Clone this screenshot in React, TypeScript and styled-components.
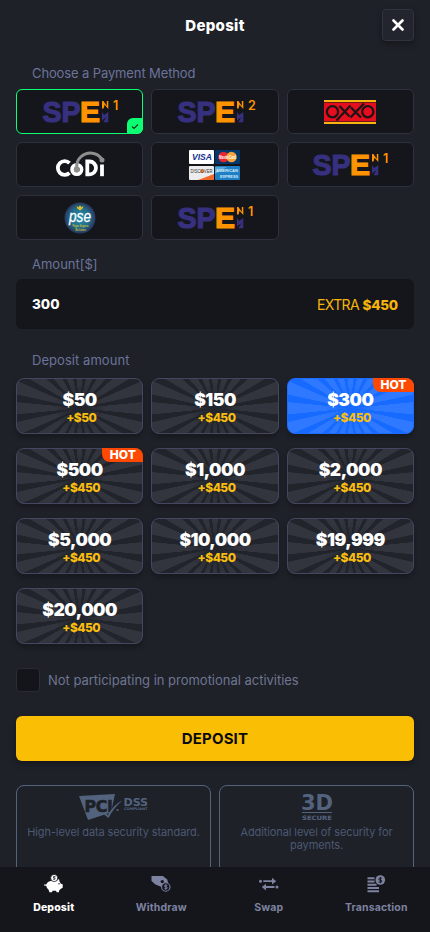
import React from "react";
import styled, { createGlobalStyle, css } from "styled-components";

const Global = createGlobalStyle`
  * { box-sizing: border-box; }
  body { margin: 0; background: #1e2128; font-family: Inter, "Liberation Sans", sans-serif; }
  button { font: inherit; padding: 0; cursor: pointer; }
`;

const Screen = styled.div`
  width: 430px;
  height: 932px;
  display: flex;
  flex-direction: column;
  overflow: hidden;
  background: #1e2128;
  color: #fff;
`;

const Header = styled.header`
  flex: none;
  display: grid;
  grid-template-columns: 32px 1fr 32px;
  align-items: center;
  height: 50px;
  padding: 0 16px;
`;

const Title = styled.h1`
  grid-column: 2;
  margin: 0;
  padding-top: 2px;
  text-align: center;
  font-size: 15px;
  line-height: 20px;
  font-weight: 800;
  letter-spacing: 0.3px;
`;

const CloseButton = styled.button`
  display: grid;
  place-items: center;
  width: 32px;
  height: 32px;
  border: 1px solid #303340;
  border-radius: 4px;
  background: #23252e;
  box-shadow: 0 3px 6px rgba(0, 0, 0, 0.3);
`;

const Content = styled.main`
  flex: 1;
  min-height: 0;
  overflow: hidden;
  padding: 12px 16px 0;
`;

const Label = styled.h2<{ $height: number; $drop?: number; $spacing?: number }>`
  display: flex;
  align-items: center;
  height: ${(p) => p.$height}px;
  margin: 0;
  padding: ${(p) => p.$drop ?? 0}px 0 0 16px;
  color: #6c739a;
  font-size: 13px;
  font-weight: 400;
  letter-spacing: ${(p) => p.$spacing ?? 0}px;
`;

const MethodGrid = styled.div`
  display: grid;
  grid-template-columns: repeat(3, 1fr);
  grid-auto-rows: 45px;
  gap: 8px;
  margin-top: 5px;
`;

const Method = styled.button<{ $active?: boolean }>`
  position: relative;
  display: grid;
  place-items: center;
  border: 1px solid ${(p) => (p.$active ? "#0cff73" : "#2d303d")};
  border-radius: 6px;
  background: #15161b;
  svg { overflow: visible; }
`;

const Tick = styled.span`
  position: absolute;
  right: -1px;
  bottom: -1px;
  display: grid;
  place-items: center;
  width: 16px;
  height: 16px;
  border-radius: 6px 0 6px 0;
  background: #0cff73;
`;

const AmountField = styled.div`
  display: flex;
  align-items: center;
  justify-content: space-between;
  height: 50px;
  padding: 0 16px;
  border-radius: 6px;
  background: #15161b;
`;

const AmountValue = styled.span`
  font-weight: 800;
  font-size: 13.5px;
`;

const Extra = styled.span`
  color: #f5b50a;
  font-size: 14px;
  letter-spacing: -0.6px;
  b { font-weight: 800; font-size: 13.5px; letter-spacing: -0.2px; }
`;

const OfferGrid = styled.div`
  display: grid;
  grid-template-columns: repeat(3, 1fr);
  grid-auto-rows: 56px;
  gap: 14px 8px;
  margin-top: 6px;
`;

const rays = (light: string, dark: string) => css`
  background:
    radial-gradient(circle at 50% 54%, ${dark} 2px, transparent 26px) border-box,
    repeating-conic-gradient(
      from -5.3deg at 50% 54%,
      ${light} 0deg 10.6deg,
      ${dark} 11.2deg 17.4deg,
      ${light} 18deg
    ) border-box;
`;

const Offer = styled.button<{ $active?: boolean }>`
  position: relative;
  display: flex;
  flex-direction: column;
  align-items: center;
  padding-top: 11px;
  border: 1px solid ${(p) => (p.$active ? "#1c6cff" : "#444760")};
  border-radius: 8px;
  box-shadow: 0 3px 5px rgba(0, 0, 0, 0.28);
  ${(p) => (p.$active ? rays("#2e79ff", "#166aff") : rays("#33353e", "#22242c"))}
  color: #fff;
`;

const OfferAmount = styled.span`
  font-size: 17.5px;
  line-height: 20px;
  font-weight: 900;
  letter-spacing: -0.5px;
`;

const OfferBonus = styled.span`
  padding-left: 3px;
  color: #f9bd0e;
  font-size: 12px;
  line-height: 16px;
  font-weight: 800;
  letter-spacing: -0.55px;
`;

const Hot = styled.span`
  position: absolute;
  top: -1px;
  right: -1px;
  width: 41px;
  height: 14px;
  border-radius: 0 8px 0 8px;
  background: #ff4800;
  font-size: 12px;
  line-height: 14px;
  font-weight: 800;
  text-align: center;
`;

const Promo = styled.label`
  display: flex;
  align-items: center;
  gap: 8px;
  height: 24px;
  margin-top: 24px;
  color: #6f7590;
  font-size: 13px;
  letter-spacing: -0.02px;
`;

const Checkbox = styled.span`
  width: 24px;
  height: 24px;
  border: 1px solid #292c37;
  border-radius: 4px;
  background: #14151a;
`;

const Submit = styled.button`
  width: 100%;
  height: 45px;
  margin-top: 24px;
  border: 0;
  border-radius: 6px;
  background: #fabe05;
  box-shadow: 0 3px 6px rgba(0, 0, 0, 0.32);
  && {
    color: #0b0b0d;
    font-size: 15px;
    font-weight: 700;
    letter-spacing: 0.15px;
  }
`;

const Trust = styled.div`
  display: grid;
  grid-template-columns: 1fr 1fr;
  gap: 8px;
  margin-top: 24px;
`;

const TrustCard = styled.section`
  display: flex;
  flex-direction: column;
  align-items: center;
  height: 110px;
  padding: 7px 0;
  border: 1px solid #53637e;
  border-radius: 8px;
  color: #4c5973;
  font-size: 11px;
  line-height: 13px;
  letter-spacing: -0.1px;
  text-align: center;
  svg { overflow: visible; }
  p { margin: 5px 0 0; }
`;

const Nav = styled.nav`
  flex: none;
  display: grid;
  grid-template-columns: repeat(4, 1fr);
  height: 65px;
  background: #15161b;
`;

const NavItem = styled.a<{ $active?: boolean }>`
  display: flex;
  flex-direction: column;
  align-items: center;
  gap: 7px;
  padding-top: 7px;
  color: ${(p) => (p.$active ? "#fff" : "#7d82a0")};
  font-size: 10.5px;
  line-height: 14px;
  font-weight: ${(p) => (p.$active ? 800 : 700)};
  letter-spacing: 0.15px;
`;

const Spei = ({ n }: { n: number }) => (
  <svg width="80" height="30" viewBox="0 0 80 30">
    <g fontFamily="Liberation Sans, Arial, sans-serif" fontWeight="700" fontSize="29.5" strokeWidth="1.2">
      <text x="2.500" y="24.700" textLength="38" lengthAdjust="spacingAndGlyphs" fill="#36307f" stroke="#36307f">SP</text>
      <text x="40" y="24.700" textLength="20" lengthAdjust="spacingAndGlyphs" fill="#ff9400" stroke="#ff9400">E</text>
    </g>
    <path d="M62 4h1.400l3.400 5V4h1.500v8L64.500 7.800 63.600 11.500H62z" fill="#ff9400" />
    <path d="M62 15l2.200 3 4.100-3v10.300h-5l3-5-3.200 2.200L62 24z" fill="#36307f" />
    <text x="73" y="13.300" fontFamily="Inter, sans-serif" fontSize="12.500" fontWeight="600" fill="#ff9400">{n}</text>
  </svg>
);

const Oxxo = () => (
  <svg width="52" height="24" viewBox="0 0 52 24">
    <rect width="52" height="24" rx="1" fill="#e60d1d" />
    <path d="M0 0h52v2H0zM0 22h52v2H0z" fill="#f6b313" />
    <path d="M0 2h52v1H0zM0 21h52v1H0z" fill="#6f1714" />
    <g fill="none" stroke="#1d1418" strokeWidth="2.300">
      <circle cx="8.500" cy="11.700" r="5.600" />
      <circle cx="43.800" cy="11.700" r="5.600" />
      <path d="M15.500 6l10 10.500M26.500 5.500L12.500 20.500M27 7.500l10 10M40 3.500L26.500 17.500" />
    </g>
  </svg>
);

const Codi = () => (
  <svg width="50" height="28" viewBox="0 0 50 28">
    <g fill="none" stroke="#fff" strokeWidth="3.800">
      <path d="M14.500 12.200a6.800 6.800 0 1 0 0 9.600" />
      <circle cx="21.800" cy="18.500" r="4.700" />
      <path d="M32.300 10.500v12.900h2.200a6.400 6.400 0 0 0 0-12.900z" />
      <path d="M47 13.500V25.200" />
    </g>
    <circle cx="21.800" cy="18.500" r="3" fill="#8e8e8e" />
    <path d="M21.800 18C20.500 7 30 0 39.500 2.700Q45 4.300 47 9" fill="none" stroke="#8e8e8e" strokeWidth="3" />
    <circle cx="47" cy="9" r="2.500" fill="#8e8e8e" />
  </svg>
);

const Cards = () => (
  <svg width="52" height="30" viewBox="0 0 52 30" fontFamily="Liberation Sans, Arial, sans-serif">
    <rect x="0" y="0" width="25" height="14" rx="1" fill="#fff" />
    <text x="3" y="10.200" textLength="20" lengthAdjust="spacingAndGlyphs" fontSize="8.500" fontWeight="700" fontStyle="italic" fill="#14318f">VISA</text>
    <rect x="0" y="16" width="25" height="14" rx="1" fill="#ececee" />
    <path d="M9 30l16-6v6z" fill="#f0682a" />
    <circle cx="13" cy="21.300" r="1.800" fill="#f0782a" />
    <text x="1.500" y="23.200" textLength="22" lengthAdjust="spacingAndGlyphs" fontSize="5.200" fill="#333">DISCOVER</text>
    <rect x="26" y="0" width="25" height="14" rx="1" fill="#04386b" />
    <circle cx="34.500" cy="7" r="5.200" fill="#e8252f" />
    <circle cx="42.500" cy="7" r="5.200" fill="#f5a43c" />
    <text x="30" y="8.600" textLength="17" lengthAdjust="spacingAndGlyphs" fontSize="4.500" fontWeight="700" fill="#fff">MasterCard</text>
    <rect x="26" y="16" width="25" height="14" rx="1" fill="#1f7fc4" />
    <path d="M26 17h12l-12 7z" fill="#7cc1e8" opacity=".6" />
    <text x="27" y="22.400" textLength="22" lengthAdjust="spacingAndGlyphs" fontSize="4.400" fontWeight="700" fill="#d6ecfa">AMERICAN</text>
    <text x="31" y="27.900" textLength="18" lengthAdjust="spacingAndGlyphs" fontSize="4.400" fontWeight="700" fill="#d6ecfa">EXPRESS</text>
  </svg>
);

const Pse = () => (
  <svg width="32" height="32" viewBox="0 0 32 32" fontFamily="Liberation Sans, sans-serif">
    <defs>
      <radialGradient id="pseGlow">
        <stop offset="0" stopColor="#2592ad" />
        <stop offset=".65" stopColor="#236a8b" />
        <stop offset="1" stopColor="#29365c" />
      </radialGradient>
    </defs>
    <circle cx="16" cy="16" r="15.500" fill="url(#pseGlow)" />
    <path d="M12.500 4l2 1.200L16 3.200l1.500 2 2-1.200-.8 2.600L16 8.500l-2.700-1.900z" fill="#d5c326" />
    <text x="5" y="19.500" textLength="22" lengthAdjust="spacingAndGlyphs" fontSize="16.500" fontStyle="italic" fill="#fff" stroke="#fff" strokeWidth=".3">pse</text>
    <text x="8.500" y="24.900" textLength="16" lengthAdjust="spacingAndGlyphs" fontSize="3.600" fontWeight="700" fill="#d5c326">Pagos Seguros</text>
    <text x="11.500" y="28.600" textLength="10" lengthAdjust="spacingAndGlyphs" fontSize="3.300" fontWeight="700" fill="#d5c326">En Linea</text>
  </svg>
);

const Pci = () => (
  <svg width="70" height="28" viewBox="0 0 70 28" fontFamily="DejaVu Sans, sans-serif" fontWeight="700">
    <path d="M0 3L36 1 32 19.500 9 27z" fill="#53637e" />
    <text x="5.500" y="18.500" textLength="28" lengthAdjust="spacingAndGlyphs" fontSize="15.500" fill="#1e2128" stroke="#1e2128" strokeWidth=".7">PCi</text>
    <path d="M24.500 21l2-1.200 2.200 2.400C32.500 15.500 37 10.500 43.500 7.200 37.500 12.500 33 18 29.500 25z" fill="#53637e" />
    <circle cx="38.500" cy="17" r="1.100" fill="#53637e" />
    <text x="44.500" y="12.500" textLength="24.500" lengthAdjust="spacingAndGlyphs" fontSize="10.500" fill="#53637e">DSS</text>
    <text x="45" y="17" textLength="23.500" lengthAdjust="spacingAndGlyphs" fontSize="3.600" fill="#53637e">COMPLIANT</text>
  </svg>
);

const Secure = () => (
  <svg width="32" height="28" viewBox="0 0 32 28" fontFamily="DejaVu Sans, sans-serif" fontWeight="700" fill="#53637e">
    <text x="0" y="17" textLength="32" lengthAdjust="spacingAndGlyphs" fontSize="21">3D</text>
    <rect x="1" y="19" width="30" height="1" />
    <text x="1" y="26.800" textLength="30" lengthAdjust="spacingAndGlyphs" fontSize="6">SECURE</text>
  </svg>
);

const PigIcon = () => (
  <svg width="20" height="20" viewBox="0 0 20 20" fill="currentColor">
    <path d="M0 10.600h2.200C3.300 7.700 6.200 6.700 9 6.700h3.500l2.500-1.600.6 2.600 1.300 2 1.800.6v3.500l-2.200 1.200-1.300 1.400-.3 1.800h-2.300l-.5-1.400H8.500L8 18.200H5.400L4.600 15.700Q2.500 14 2.200 11.700L0 11.600z" />
    <circle cx="10.200" cy="4" r="3.600" stroke="#15161b" strokeWidth=".8" />
    <path d="M11.500 2.600h-2v1.300h1.500v1.300H9" fill="none" stroke="#15161b" strokeWidth=".8" />
    <circle cx="15" cy="9.700" r=".7" fill="#15161b" />
  </svg>
);

const WithdrawIcon = () => (
  <svg width="20" height="20" viewBox="0 0 20 20">
    <path d="M.5 2h11.300l4.500 3.500.8 4-1.800.3-2-1.400-1.600 2.400-1 2.300-6.300-2.600L.5 7z" fill="currentColor" />
    <circle cx="11.300" cy="7.600" r="1.700" fill="#15161b" />
    <circle cx="14.800" cy="13" r="4.200" fill="#15161b" stroke="currentColor" strokeWidth="1.100" />
    <path d="M16.400 11.200h-2.600v1.700h2.200v1.800h-2.600M14.800 10.300v5.400" fill="none" stroke="currentColor" strokeWidth=".9" />
  </svg>
);

const SwapIcon = () => (
  <svg width="20" height="20" viewBox="0 0 20 20" fill="currentColor">
    <circle cx="1.500" cy="7.200" r="1.500" />
    <path d="M4.300 6.300H13V3.800l4.200 3.400L13 10.600V8.100H4.300z" />
    <circle cx="18" cy="13" r="1.500" />
    <path d="M15.500 12.100H7V9.700L2.800 13 7 16.400v-2.500h8.500z" />
  </svg>
);

const TransactionIcon = () => (
  <svg width="20" height="20" viewBox="0 0 20 20">
    <path d="M1.500 4.200h7M1.500 7.500h7M1.500 10.800h9M1.500 14h11.500M1.500 17.300h11.500" stroke="currentColor" strokeWidth="1.900" />
    <circle cx="14.300" cy="6" r="4.800" fill="currentColor" />
    <path d="M16 4.200h-2.700l-.5 1.700 3 .5-.4 1.700h-2.900M14.400 3v6.200" fill="none" stroke="#15161b" strokeWidth=".9" />
  </svg>
);

const methods: React.ComponentType[] = [
  () => <Spei n={1} />,
  () => <Spei n={2} />,
  Oxxo,
  Codi,
  Cards,
  () => <Spei n={1} />,
  Pse,
  () => <Spei n={1} />,
];

const offers: { amount: string; bonus: string; hot?: boolean; active?: boolean }[] = [
  { amount: "$50", bonus: "+$50" },
  { amount: "$150", bonus: "+$450" },
  { amount: "$300", bonus: "+$450", hot: true, active: true },
  { amount: "$500", bonus: "+$450", hot: true },
  { amount: "$1,000", bonus: "+$450" },
  { amount: "$2,000", bonus: "+$450" },
  { amount: "$5,000", bonus: "+$450" },
  { amount: "$10,000", bonus: "+$450" },
  { amount: "$19,999", bonus: "+$450" },
  { amount: "$20,000", bonus: "+$450" },
];

export default function App() {
  return (
    <Screen>
      <Global />
      <Header>
        <Title>Deposit</Title>
        <CloseButton aria-label="Close">
          <svg width="12" height="12" viewBox="0 0 12 12">
            <path d="M1.500 1.500l9 9M10.500 1.500l-9 9" stroke="#fff" strokeWidth="2.600" strokeLinecap="round" />
          </svg>
        </CloseButton>
      </Header>
      <Content>
        <Label $height={22} $spacing={-0.12}>Choose a Payment Method</Label>
        <MethodGrid>
          {methods.map((Logo, i) => (
            <Method key={i} $active={i === 0}>
              <Logo />
              {i === 0 && (
                <Tick>
                  <svg width="8" height="7" viewBox="0 0 8 7">
                    <path d="M1 3.500l2 2L7 1.500" fill="none" stroke="#15361f" strokeWidth="1.200" />
                  </svg>
                </Tick>
              )}
            </Method>
          ))}
        </MethodGrid>
        <Label $height={39} $drop={8}>Amount[$]</Label>
        <AmountField>
          <AmountValue>300</AmountValue>
          <Extra>EXTRA <b>$450</b></Extra>
        </AmountField>
        <Label $height={43} $drop={19} $spacing={0.05}>Deposit amount</Label>
        <OfferGrid>
          {offers.map((o) => (
            <Offer key={o.amount} $active={o.active}>
              <OfferAmount>{o.amount}</OfferAmount>
              <OfferBonus>{o.bonus}</OfferBonus>
              {o.hot && <Hot>HOT</Hot>}
            </Offer>
          ))}
        </OfferGrid>
        <Promo>
          <Checkbox />
          Not participating in promotional activities
        </Promo>
        <Submit>DEPOSIT</Submit>
        <Trust>
          <TrustCard>
            <Pci />
            <p>High-level data security standard.</p>
          </TrustCard>
          <TrustCard>
            <Secure />
            <p>Additional level of security for<br />payments.</p>
          </TrustCard>
        </Trust>
      </Content>
      <Nav>
        <NavItem $active><PigIcon />Deposit</NavItem>
        <NavItem><WithdrawIcon />Withdraw</NavItem>
        <NavItem><SwapIcon />Swap</NavItem>
        <NavItem><TransactionIcon />Transaction</NavItem>
      </Nav>
    </Screen>
  );
}
